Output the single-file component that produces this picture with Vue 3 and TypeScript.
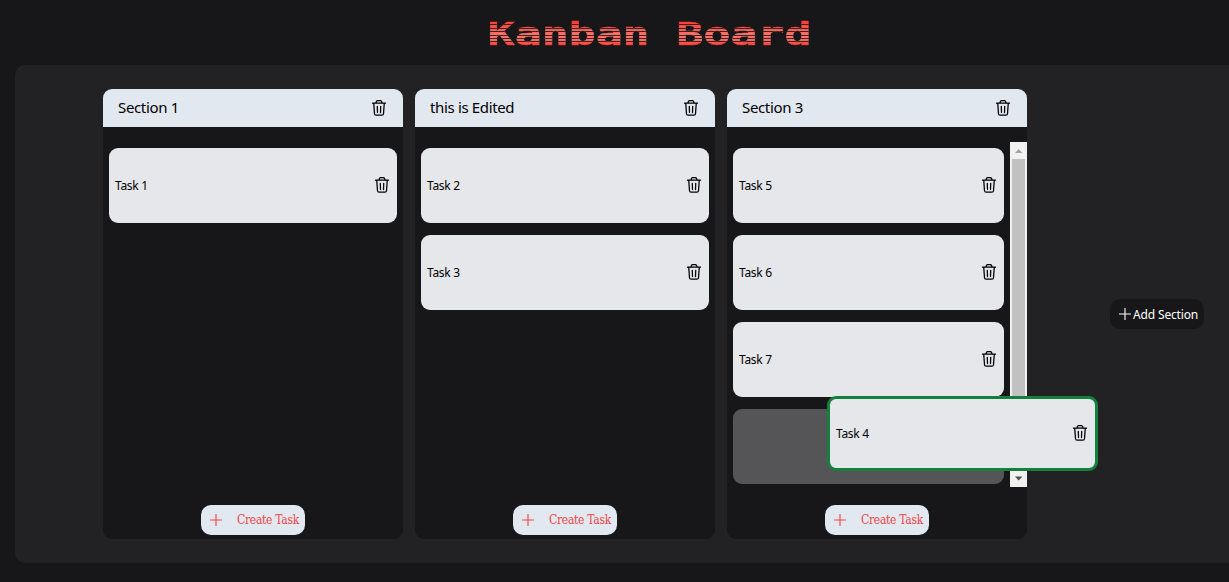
<script setup lang="ts">
import { defineComponent, h } from 'vue'

interface Section {
  title: string
  tasks: string[]
  scroll: boolean
}

const sections: Section[] = [
  { title: 'Section 1', tasks: ['Task 1'], scroll: false },
  { title: 'this is Edited', tasks: ['Task 2', 'Task 3'], scroll: false },
  { title: 'Section 3', tasks: ['Task 5', 'Task 6', 'Task 7'], scroll: true },
]

const TrashIcon = defineComponent(() => () =>
  h('svg', { width: 18, height: 18, viewBox: '0 0 24 24', fill: 'none', stroke: 'currentColor', 'stroke-width': 1.7, 'stroke-linecap': 'round', 'stroke-linejoin': 'round' }, [
    h('path', { d: 'M3.3 5.6H20.7M5 5.8l1 13.8c.1 1.300.8 2 2.200 2h7.600c1.400 0 2.100-.7 2.200-2L19 5.800M7.800 5.300L8.600 3.200C8.900 2.500 9.500 2.200 10.200 2.200h3.600c.700 0 1.300.300 1.600 1l.800 2.100M9.700 9.700l.3 8.300M14.300 9.700l-.3 8.300' }),
  ]),
)
const PlusIcon = defineComponent(() => () =>
  h('svg', { width: 14, height: 14, viewBox: '0 0 14 14', fill: 'none', stroke: 'currentColor', 'stroke-width': 1.1 }, [
    h('path', { d: 'M7 1v12M1 7h12' }),
  ]),
)
</script>

<template>
  <div class="page">
    <h1 class="heading"><span>Kanban Board</span></h1>
    <main class="board">
      <section v-for="s in sections" :key="s.title" class="column">
        <header class="column-head">
          <span class="name">{{ s.title }}</span>
          <TrashIcon />
        </header>
        <div class="list-area">
          <div class="list">
            <article v-for="t in s.tasks" :key="t" class="card">
              <span>{{ t }}</span>
              <TrashIcon />
            </article>
            <div v-if="s.scroll" class="slot"></div>
          </div>
          <div v-if="s.scroll" class="scrollbar">
            <svg width="17" height="17" viewBox="0 0 17 17"><path d="M5 11h7.400L8.700 7z" fill="#a3a3a3" /></svg>
            <div class="thumb"></div>
            <svg width="17" height="17" viewBox="0 0 17 17"><path d="M5 6.500h7.400L8.700 10.500z" fill="#505050" /></svg>
          </div>
        </div>
        <footer class="column-foot">
          <button class="create"><PlusIcon /><span>Create Task</span></button>
        </footer>
      </section>
      <button class="add"><PlusIcon /><span>Add Section</span></button>
    </main>
    <article class="card dragged">
      <span>Task 4</span>
      <TrashIcon />
    </article>
  </div>
</template>

<style>
body {
  background: #171719;
  overflow: hidden;
}
</style>

<style scoped>
.page {
  position: relative;
  box-sizing: border-box;
  height: 582px;
  padding-left: 15px;
  overflow: hidden;
  background: #171719;
  color: #000;
  font-family: "Noto Sans", "Open Sans", sans-serif;
}
.heading {
  display: flex;
  justify-content: center;
  width: 1269px;
  height: 65px;
  margin: 0;
  font: bold 32px/69px "DejaVu Sans Mono", monospace;
}
.heading span {
  height: 65px;
  transform: scaleX(1.4);
  white-space: pre;
  color: transparent;
  -webkit-text-stroke: 0.5px transparent;
  background:
    repeating-linear-gradient(transparent 0 2.4px, rgba(23, 23, 25, 0.85) 2.4px 3.4px) 0 21.6px / 100% 26px no-repeat,
    linear-gradient(#fb3b30 21px, #fa746b 35px, #fa746b 39px, #fb3e38 45px);
  background-clip: text;
}
.board {
  display: flex;
  gap: 12px;
  box-sizing: border-box;
  width: 1300px;
  height: 498px;
  padding: 24px 0 0 88px;
  border-radius: 10px;
  background: #222224;
}
.column {
  display: flex;
  flex-direction: column;
  flex: none;
  width: 300px;
  height: 450px;
  border-radius: 9px;
  overflow: hidden;
  background: #171719;
}
.column-head {
  display: flex;
  align-items: center;
  justify-content: space-between;
  box-sizing: border-box;
  height: 38px;
  padding: 0 15px;
  background: #e2e8f0;
  font-size: 15px;
  letter-spacing: -0.35px;
}
.name {
  padding-bottom: 2px;
}
.list-area {
  display: flex;
  height: 345px;
  margin-top: 15px;
}
.list {
  display: flex;
  flex: 1;
  flex-direction: column;
  gap: 12px;
  padding: 6px;
}
.card {
  display: flex;
  align-items: center;
  justify-content: space-between;
  box-sizing: border-box;
  height: 75px;
  flex: none;
  padding: 0 6px;
  border-radius: 9px;
  background: #e5e7eb;
  font-size: 12px;
  letter-spacing: -0.3px;
}
.card svg {
  margin-bottom: 1px;
}
.slot {
  flex: none;
  height: 75px;
  border-radius: 9px;
  background: #555558;
}
.scrollbar {
  display: flex;
  flex-direction: column;
  width: 17px;
  background: #f1f1f1;
}
.thumb {
  flex: 1;
  margin: 0 2px;
  background: #c1c1c1;
}
.column-foot {
  display: flex;
  justify-content: center;
  margin-top: 18px;
}
button {
  display: flex;
  align-items: center;
  box-sizing: border-box;
  height: 30px;
  border: 0;
  border-radius: 10px;
  white-space: nowrap;
}
.create {
  gap: 14px;
  width: 104px;
  padding: 0 0 0 8px;
  background: #e2e8f0;
  color: #ef4444;
  font: 12px "DejaVu Serif Condensed", "DejaVu Serif", serif;
  letter-spacing: -0.3px;
}
.add {
  gap: 1px;
  flex: none;
  width: 94px;
  margin: 210px 0 0 71px;
  padding: 0 0 0 8px;
  background: #171719;
  color: #fff;
  font: 12px "Noto Sans", sans-serif;
  letter-spacing: -0.15px;
}
.dragged {
  position: absolute;
  left: 827px;
  top: 396px;
  width: 271px;
  border: 3px solid #15803d;
}
</style>
